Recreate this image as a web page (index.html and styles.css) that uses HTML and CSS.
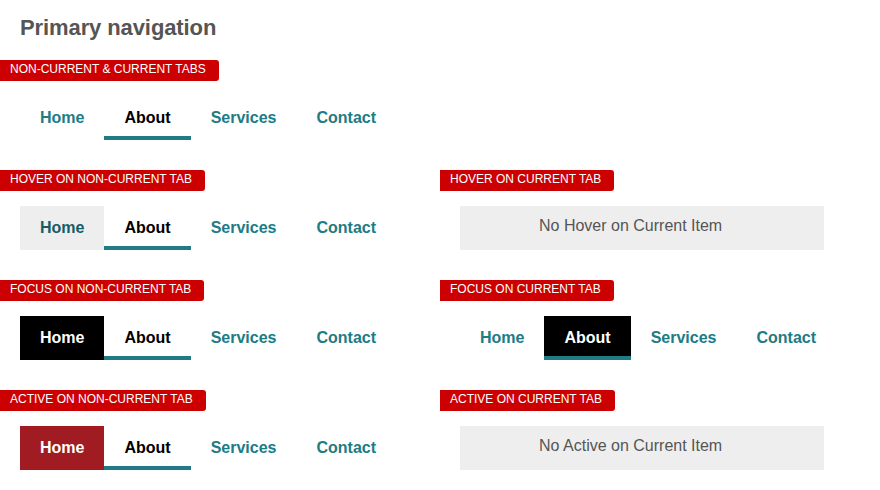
FILE: index.html
```html
<!DOCTYPE html>
<html lang="en">
<head>
<meta charset="utf-8">
<title>Primary navigation</title>
<link rel="stylesheet" href="styles.css">
</head>
<body>
<h1 class="title">Primary navigation</h1>

<section class="demo">
  <div class="label">NON-CURRENT &amp; CURRENT TABS</div>
  <nav class="tabs">
    <a class="tab">Home</a>
    <a class="tab current">About</a>
    <a class="tab">Services</a>
    <a class="tab">Contact</a>
  </nav>
</section>

<div class="grid">
  <section class="demo">
    <div class="label">HOVER ON NON-CURRENT TAB</div>
    <nav class="tabs">
      <a class="tab hover">Home</a>
      <a class="tab current">About</a>
      <a class="tab">Services</a>
      <a class="tab">Contact</a>
    </nav>
  </section>
  <section class="demo">
    <div class="label">HOVER ON CURRENT TAB</div>
    <div class="note">No Hover on Current Item</div>
  </section>

  <section class="demo">
    <div class="label">FOCUS ON NON-CURRENT TAB</div>
    <nav class="tabs">
      <a class="tab focus">Home</a>
      <a class="tab current">About</a>
      <a class="tab">Services</a>
      <a class="tab">Contact</a>
    </nav>
  </section>
  <section class="demo">
    <div class="label">FOCUS ON CURRENT TAB</div>
    <nav class="tabs">
      <a class="tab">Home</a>
      <a class="tab current focus">About</a>
      <a class="tab">Services</a>
      <a class="tab">Contact</a>
    </nav>
  </section>

  <section class="demo">
    <div class="label">ACTIVE ON NON-CURRENT TAB</div>
    <nav class="tabs">
      <a class="tab active">Home</a>
      <a class="tab current">About</a>
      <a class="tab">Services</a>
      <a class="tab">Contact</a>
    </nav>
  </section>
  <section class="demo">
    <div class="label">ACTIVE ON CURRENT TAB</div>
    <div class="note">No Active on Current Item</div>
  </section>
</div>
</body>
</html>
```

FILE: styles.css
```css
* { box-sizing: border-box; }

body {
  margin: 0;
  background: #ffffff;
  font-family: "Liberation Sans", Arial, Helvetica, sans-serif;
  color: #555555;
}

.title {
  margin: 15px 0 19px 20px;
  font-size: 22px;
  line-height: 26px;
  font-weight: bold;
  color: #555555;
  letter-spacing: -0.1px;
}

.grid {
  display: grid;
  grid-template-columns: 440px 440px;
}

.demo {
  display: flex;
  flex-direction: column;
  align-items: flex-start;
  padding-bottom: 30px;
}

.label {
  display: inline-block;
  background: #cc0000;
  color: #ffffff;
  font-size: 12px;
  line-height: 19px;
  padding: 0 13px 2px 10px;
  border-radius: 0 3px 3px 0;
}

.tabs {
  display: flex;
  margin: 15px 0 0 20px;
}

.tab {
  display: block;
  height: 44px;
  line-height: 44px;
  padding: 0 20px;
  font-size: 16px;
  font-weight: bold;
  color: #207b85;
  text-decoration: none;
}

.tab.current {
  color: #000000;
  box-shadow: inset 0 -4px 0 #207b85;
}

.tab.hover {
  background: #eeeeee;
  color: #165c64;
}

.tab.focus {
  background: #000000;
  color: #ffffff;
}

.tab.active {
  background: #a01c22;
  color: #ffffff;
}

.note {
  margin: 15px 0 0 20px;
  width: 364px;
  height: 44px;
  line-height: 40px;
  padding-left: 79px;
  background: #eeeeee;
  color: #555555;
  font-size: 16px;
}
```
